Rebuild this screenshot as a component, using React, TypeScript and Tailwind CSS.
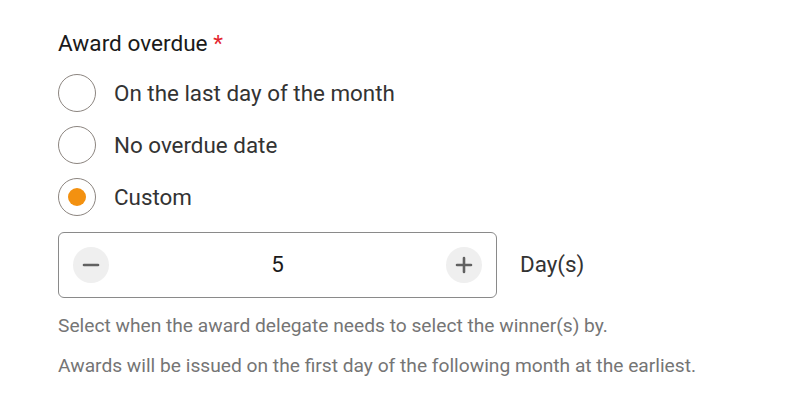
export default function App() {
  const options = [
    { label: "On the last day of the month", checked: false },
    { label: "No overdue date", checked: false },
    { label: "Custom", checked: true },
  ];

  return (
    <div className="w-[786px] h-[402px] bg-white pl-[58px] pt-[30px] font-['Roboto',sans-serif]">
      {/* Title */}
      <div className="text-[22.6px] leading-[28px] text-[#1a1a1a]">
        Award overdue <span className="text-[#e3262f]">*</span>
      </div>

      {/* Radios */}
      <div className="mt-[16px] flex flex-col gap-[14px]">
        {options.map((o) => (
          <div key={o.label} className="flex items-center gap-[18px]">
            <div className="w-[38px] h-[38px] rounded-full border border-[#8c8580] flex items-center justify-center">
              {o.checked && <div className="w-[18px] h-[18px] rounded-full bg-[#f39110]" />}
            </div>
            <span className="text-[22.4px] leading-[28px] text-[#333333]">{o.label}</span>
          </div>
        ))}
      </div>

      {/* Stepper */}
      <div className="mt-[16px] flex items-center gap-[23px]">
        <div className="w-[439px] h-[66px] rounded-[6px] border border-[#8a8a8a] flex items-center justify-between px-[14px]">
          <button className="w-[36px] h-[36px] rounded-full bg-[#efefef] flex items-center justify-center">
            <svg width="18" height="18" viewBox="0 0 18 18">
              <path d="M2 9h14" stroke="#616161" strokeWidth="2.6" strokeLinecap="round" />
            </svg>
          </button>
          <span className="text-[22.4px] text-[#1a1a1a]">5</span>
          <button className="w-[36px] h-[36px] rounded-full bg-[#efefef] flex items-center justify-center">
            <svg width="18" height="18" viewBox="0 0 18 18">
              <path d="M2 9h14M9 2v14" stroke="#616161" strokeWidth="2.6" strokeLinecap="round" />
            </svg>
          </button>
        </div>
        <span className="text-[22.4px] text-[#333333]">Day(s)</span>
      </div>

      {/* Helper text */}
      <div className="mt-[16px] flex flex-col gap-[16px] text-[19.2px] leading-[24px] text-[#757575]">
        <p>Select when the award delegate needs to select the winner(s) by.</p>
        <p>Awards will be issued on the first day of the following month at the earliest.</p>
      </div>
    </div>
  );
}
